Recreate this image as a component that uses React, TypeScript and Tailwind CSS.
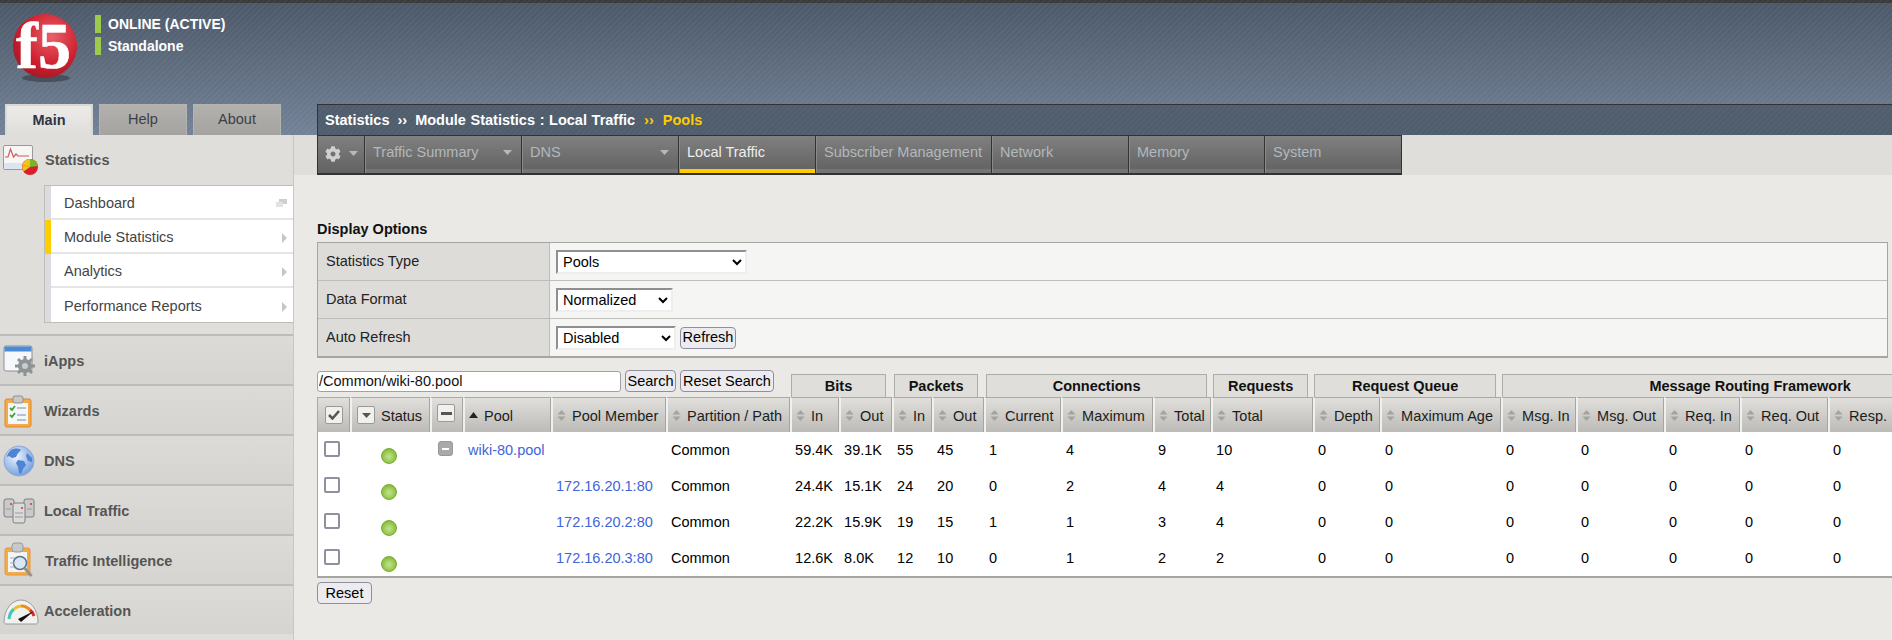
import { FaCog } from "react-icons/fa";

const widths = [33, 80, 33, 88, 115, 124, 49, 53, 40, 52, 77, 92, 58, 102, 67, 121, 75, 88, 76, 88, 88, 88];

function SortIcon({ active }: { active?: boolean }) {
  if (active) {
    return (
      <svg width="9" height="6" viewBox="0 0 9 6" className="shrink-0">
        <path d="M4.5 0 9 6H0z" fill="#222" />
      </svg>
    );
  }
  return (
    <svg width="9" height="11" viewBox="0 0 9 11" className="shrink-0">
      <path d="M4.5 0 8.5 4.5H.5z M.5 6.5h8L4.5 11z" fill="#a3a3a0" />
    </svg>
  );
}

function Th({ label, active }: { label: string; active?: boolean }) {
  return (
    <th className="h-[35px] p-0 font-normal text-left border-t border-t-[#a9a9a6] border-l-2 border-l-[#f0f0ee] border-r border-r-[#a5a5a2] bg-gradient-to-b from-[#e0dfdc] to-[#bcbbb7] whitespace-nowrap overflow-hidden">
      <div className="flex items-center gap-[6px] pl-[4px]">
        <SortIcon active={active} />
        <span className="text-[#1c1c1c] pt-[3px]">{label}</span>
      </div>
    </th>
  );
}

function Group({ label, span, pad }: { label: string; span: number; pad?: string }) {
  return (
    <th colSpan={span} className="p-0 align-bottom">
      <div className={`h-[23px] border border-b-0 border-[#acaca9] bg-[#dfdeda] font-bold text-[#111] text-center leading-[22px] whitespace-nowrap ${pad ?? "ml-[1px] mr-[6px]"}`}>
        {label}
      </div>
    </th>
  );
}

function Dot() {
  return (
    <span className="block w-[16px] h-[16px] rounded-full mx-auto bg-[radial-gradient(circle_at_50%_55%,#c2e294_0%,#9fce58_45%,#6fa82a_100%)] border border-[#76ad30]" />
  );
}

function Check() {
  return <input type="checkbox" className="block appearance-none w-[16px] h-[16px] border-2 border-[#8f8f9d] rounded-[2px] bg-white" />;
}

const rows = [
  { pool: "wiki-80.pool", member: "", v: ["59.4K", "39.1K", "55", "45", "1", "4", "9", "10"], minus: true },
  { pool: "", member: "172.16.20.1:80", v: ["24.4K", "15.1K", "24", "20", "0", "2", "4", "4"] },
  { pool: "", member: "172.16.20.2:80", v: ["22.2K", "15.9K", "19", "15", "1", "1", "3", "4"] },
  { pool: "", member: "172.16.20.3:80", v: ["12.6K", "8.0K", "12", "10", "0", "1", "2", "2"] },
];

const IconStatistics = (
  <svg width="38" height="32" viewBox="0 0 38 32">
    <rect x="1.5" y="1.5" width="29" height="24" rx="1.5" fill="#f6f6f6" stroke="#9a9a9a" />
    <rect x="2" y="19" width="28" height="6" fill="#dbe5ef" />
    <path d="M3 13h3l2.5-8 3 8 2.5-3 2 2h11" fill="none" stroke="#cf5b5b" strokeWidth="1.2" />
    <circle cx="28" cy="23" r="8" fill="#d8202a" />
    <path d="M28 23V15a8 8 0 0 1 8 7z" fill="#76b82a" />
    <path d="M28 23 20.5 21a8 8 0 0 1 7.5-6z" fill="#f2c21a" />
    <path d="M28 23l-7.5-2a8 8 0 0 0 1 6.500z" fill="#f2c21a" />
  </svg>
);
const IconIApps = (
  <svg width="34" height="32" viewBox="0 0 34 32">
    <rect x="1" y="1" width="28" height="25" rx="2" fill="#f7f8fb" stroke="#8f8f8f" />
    <rect x="1.500" y="1.500" width="27" height="5" fill="#4a8bd6" />
    <circle cx="22" cy="21" r="7" fill="#8d9496" />
    <path d="M22 11v20M12 21h20M15 14l14 14M29 14 15 28" stroke="#8d9496" strokeWidth="3" />
    <circle cx="22" cy="21" r="3" fill="#c9cdce" />
  </svg>
);
const IconWizards = (
  <svg width="32" height="34" viewBox="0 0 32 34">
    <rect x="2" y="5" width="26" height="28" rx="2" fill="#f4a94a" stroke="#d98a2b" />
    <rect x="5" y="9" width="20" height="21" fill="#f4f6f8" />
    <rect x="10" y="2" width="10" height="7" rx="2" fill="#c8c8c8" stroke="#8f8f8f" />
    <path d="M7 14l2 2 3-4M7 21l2 2 3-4" fill="none" stroke="#3da535" strokeWidth="1.800" />
    <path d="M14 14h9M14 21h9M14 26h9" stroke="#9db3c7" strokeWidth="1.500" />
  </svg>
);
const IconGlobe = (
  <svg width="32" height="32" viewBox="0 0 32 32">
    <defs>
      <radialGradient id="gl" cx="0.4" cy="0.35" r="0.8">
        <stop offset="0" stopColor="#eef4fd" />
        <stop offset="1" stopColor="#5d8fdb" />
      </radialGradient>
    </defs>
    <circle cx="16" cy="16" r="15" fill="url(#gl)" stroke="#8fa9cf" />
    <path d="M8 5c3-2 8-2 10 0l-3 3-2 4-4 1-3-2-2 1c0-3 2-5 4-7z" fill="#4f83d4" />
    <path d="M15 15l6 1 2 4-3 4-2 5-2-1-1-6-2-4z" fill="#4f83d4" />
    <path d="M24 8l5 5v4l-4-1-2-5z" fill="#4f83d4" />
  </svg>
);
const IconServers = (
  <svg width="32" height="28" viewBox="0 0 32 28">
    <rect x="1" y="2" width="10" height="18" rx="2" fill="#c9cbca" stroke="#7f7f7f" />
    <rect x="21" y="2" width="10" height="18" rx="2" fill="#c9cbca" stroke="#7f7f7f" />
    <rect x="10" y="6" width="12" height="20" rx="2" fill="#dadbda" stroke="#7f7f7f" />
    <circle cx="8" cy="7" r="1.100" fill="#d43b3b" />
    <circle cx="28" cy="7" r="1.100" fill="#d43b3b" />
    <circle cx="19" cy="11" r="1.100" fill="#d43b3b" />
    <path d="M12 16h8M12 20h8M3 12h5M24 12h5" stroke="#9a9a9a" />
  </svg>
);
const IconTI = (
  <svg width="32" height="38" viewBox="0 0 32 38">
    <rect x="2" y="6" width="25" height="27" rx="2" fill="#f4a94a" stroke="#e19a3c" />
    <rect x="5" y="10" width="19" height="20" fill="#f2f4f6" />
    <rect x="9" y="1" width="11" height="9" rx="3" fill="#c8c8c8" stroke="#9a9a9a" />
    <circle cx="17" cy="21" r="6.500" fill="#d8e6f6" stroke="#5c7386" strokeWidth="1.500" />
    <path d="M21.500 26l7 8" stroke="#8f9496" strokeWidth="3" />
    <path d="M7 16h5M7 21h4M7 25h4" stroke="#9db3c7" />
  </svg>
);
const IconGauge = (
  <svg width="36" height="28" viewBox="0 0 36 28">
    <path d="M1 25a17 22 0 0 1 34 0c0 1-1 2-2 2H3c-1 0-2-1-2-2z" fill="#f1f1ef" stroke="#9a9a9a" />
    <path d="M6 22a12 14 0 0 1 5-10" fill="none" stroke="#45c4b8" strokeWidth="3" />
    <path d="M11 12a12 14 0 0 1 7-3" fill="none" stroke="#f0c020" strokeWidth="3" />
    <path d="M18 9a12 14 0 0 1 9 4" fill="none" stroke="#ee8a25" strokeWidth="3" />
    <path d="M27 13a12 14 0 0 1 4 6" fill="none" stroke="#e02b2b" strokeWidth="3" />
    <path d="M15 22 31 14l-13 11z" fill="#111" />
  </svg>
);

const sideItems = [
  { label: "iApps", icon: IconIApps },
  { label: "Wizards", icon: IconWizards },
  { label: "DNS", icon: IconGlobe },
  { label: "Local Traffic", icon: IconServers },
  { label: "Traffic Intelligence", icon: IconTI },
  { label: "Acceleration", icon: IconGauge },
];

const menu = [
  { label: "Dashboard" },
  { label: "Module Statistics", active: true, arrow: true },
  { label: "Analytics", arrow: true },
  { label: "Performance Reports", arrow: true },
];

const Caret = () => (
  <svg width="9" height="5" viewBox="0 0 9 5">
    <path d="M0 0h9L4.500 5z" fill="#b8b8b8" />
  </svg>
);

const navItems = [
  { label: "Traffic Summary", w: "w-[157px]", caret: true },
  { label: "DNS", w: "w-[157px]", caret: true },
  { label: "Local Traffic", w: "w-[137px]", active: true },
  { label: "Subscriber Management", w: "w-[176px]" },
  { label: "Network", w: "w-[137px]" },
  { label: "Memory", w: "w-[136px]" },
  { label: "System", w: "w-[137px]" },
];

const btn = "h-[22px] px-0 rounded-[4px] border border-[#8f8f9d] bg-[#ebebf0] text-[14.5px] leading-none text-black whitespace-nowrap";
const sel = "h-[24px] pl-[1px] bg-white text-[14.5px] text-black border-2 border-t-[#8f8f8f] border-l-[#8f8f8f] border-r-[#eeeeee] border-b-[#eeeeee]";

export default function App() {
  return (
    <div className="w-[1892px] h-[640px] overflow-hidden flex font-['Liberation_Sans',Arial,sans-serif] text-[14.5px] bg-no-repeat bg-[length:100%_135px,100%_135px] bg-[repeating-linear-gradient(135deg,rgba(255,255,255,0)_0_2px,rgba(255,255,255,0.035)_2px_4px),linear-gradient(180deg,#3a3a3a_0,#3a3a3a_3px,#4b5868_3px,#738297_135px)] bg-[#eae9e5]">
      {/* left column */}
      <div className="w-[294px] shrink-0 flex flex-col">
        <div className="h-[104px] flex items-start pl-[12px] pt-[13px]">
          <svg width="70" height="70" viewBox="0 0 70 70" className="shrink-0 overflow-visible">
            <defs>
              <radialGradient id="ball" cx="0.6" cy="0.35" r="0.75">
                <stop offset="0" stopColor="#e8616a" />
                <stop offset="0.6" stopColor="#cf1f2e" />
                <stop offset="1" stopColor="#9c1622" />
              </radialGradient>
            </defs>
            <ellipse cx="34" cy="65" rx="24" ry="4" fill="#30343a" opacity="0.55" />
            <circle cx="33" cy="33" r="32" fill="url(#ball)" />
            <text x="4" y="55" fontFamily="Liberation Serif" fontWeight="700" fontSize="66" fill="#ffffff" stroke="#ffffff" strokeWidth="0.6">f5</text>
          </svg>
          <div className="ml-[13px] pt-[2px] flex flex-col gap-[4px] font-bold text-white text-[14px]">
            <div className="flex items-center h-[18px] gap-[7px]">
              <span className="w-[6px] h-[18px] bg-[#9ccb4b]" />
              <span>ONLINE (ACTIVE)</span>
            </div>
            <div className="flex items-center h-[18px] gap-[7px]">
              <span className="w-[6px] h-[18px] bg-[#9ccb4b]" />
              <span>Standalone</span>
            </div>
          </div>
        </div>

        <div className="h-[31px] flex pl-[5px] gap-[6px]">
          <div className="w-[88px] flex items-center justify-center pt-[1px] font-bold text-[#2f3542] border-t-2 border-x-2 border-[#d8d8d6] bg-gradient-to-b from-[#ecebe8] to-[#dfdeda]">Main</div>
          <div className="w-[88px] flex items-center justify-center text-[#3c4048] border border-b-0 border-[#b4b4b0] bg-gradient-to-b from-[#b2b1ad] to-[#a4a39f]">Help</div>
          <div className="w-[88px] flex items-center justify-center text-[#3c4048] border border-b-0 border-[#b4b4b0] bg-gradient-to-b from-[#b2b1ad] to-[#a4a39f]">About</div>
        </div>

        <div className="flex-1 bg-[#dfdeda] border-r border-[#c8c7c3] flex flex-col">
          <div className="h-[50px] shrink-0 flex items-center pl-[2px] font-bold text-[#555]">
            <span className="w-[43px] shrink-0">{IconStatistics}</span>
            <span className="pt-[2px]">Statistics</span>
          </div>
          <div className="ml-[44px] border border-r-0 border-[#bdbdba] bg-white">
            {menu.map((m, i) => (
              <div key={m.label} className="h-[34px] flex items-stretch">
                <span className={`w-[6px] shrink-0 ${m.active ? "bg-[#ffcc00]" : "bg-[#dcdce0]"}`} />
                <div className={`flex-1 flex items-center justify-between pl-[13px] pr-[6px] pt-[3px] text-[#444] ${i < 3 ? "border-b-2 border-[#e5e5e5]" : ""}`}>
                  <span>{m.label}</span>
                  {m.arrow ? (
                    <svg width="5" height="10" viewBox="0 0 5 10"><path d="M0 0l5 5-5 5z" fill="#c6c6c6" /></svg>
                  ) : (
                    <svg width="11" height="8" viewBox="0 0 11 8" className="mb-[2px]"><path d="M3 0h8v5H3z" fill="#cfcfcf" /><path d="M0 3h7v5H0z" fill="#e2e2e2" /></svg>
                  )}
                </div>
              </div>
            ))}
          </div>
          <div className="h-[11px] shrink-0" />
          {sideItems.map((s, i) => (
            <div key={s.label} className="h-[50px] shrink-0 border-t-2 border-[#bcbcb9] flex items-center pt-[1px] bg-gradient-to-b from-[#dcdbd7] to-[#d5d4d0] font-bold text-[#555]">
              <span className="w-[44px] pl-[3px] shrink-0 flex items-center">{s.icon}</span>
              <span className={i === 4 ? "pl-[1px] pt-[2px]" : "pt-[2px]"}>{s.label}</span>
            </div>
          ))}
        </div>
      </div>

      {/* right column */}
      <div className="flex-1 min-w-0 pt-[104px] flex flex-col">
        <div className="ml-[23px] h-[31px] border-t border-l border-[#333] bg-[#4f5d6d] bg-[repeating-linear-gradient(135deg,rgba(255,255,255,0)_0_2px,rgba(255,255,255,0.025)_2px_4px)] flex items-center pl-[7px] pt-[2px] font-bold text-white whitespace-pre [word-spacing:0.6px]">
          <span>Statistics</span>
          <span className="mx-[8px]">››</span>
          <span>Module Statistics : Local Traffic</span>
          <span className="mx-[9px] text-[#ffcc00]">››</span>
          <span className="text-[#ffcc00]">Pools</span>
        </div>
        <div className="h-[40px] flex bg-[#dfdeda]">
          <div className="ml-[23px] flex border-l border-b-2 border-t border-[#333]">
            <div className="w-[47px] flex items-center pl-[7px] gap-[8px] pb-[2px] bg-gradient-to-b from-[#808080] to-[#626262] border-r border-[#333]">
              <FaCog className="text-[#d0d0d0] text-[16px]" />
              <Caret />
            </div>
            {navItems.map((n) => (
              <div key={n.label} className={`${n.w} flex flex-col border-r border-[#333] border-l border-l-[#8a8a8a]`}>
                <div className="h-[33px] flex items-center justify-between pl-[7px] pr-[9px] bg-gradient-to-b from-[#808080] to-[#646464]">
                  <span className={n.active ? "text-[#eeeeee]" : "text-[#b2b8bc]"}>{n.label}</span>
                  {n.caret ? <Caret /> : null}
                </div>
                <div className={`flex-1 ${n.active ? "bg-[#ffcc00]" : "bg-[#747474]"}`} />
              </div>
            ))}
          </div>
        </div>

        <div className="pl-[23px] pr-[4px] pt-[46px]">
          <div className="h-[21px] font-bold text-[#111] leading-[16px]">Display Options</div>
          <div className="border border-[#a5a5a2] border-b-2 flex flex-col bg-[#f5f5f3] text-[#222]">
            <div className="h-[38px] flex border-b border-[#bdbdba]">
              <div className="w-[232px] bg-[#dddcd8] border-r border-[#bdbdba] flex items-center pl-[8px]">Statistics Type</div>
              <div className="flex-1 flex items-center pl-[6px]">
                <select defaultValue="Pools" className={`${sel} w-[191px]`}><option>Pools</option></select>
              </div>
            </div>
            <div className="h-[38px] flex border-b border-[#bdbdba]">
              <div className="w-[232px] bg-[#dddcd8] border-r border-[#bdbdba] flex items-center pl-[8px]">Data Format</div>
              <div className="flex-1 flex items-center pl-[6px]">
                <select defaultValue="Normalized" className={`${sel} w-[117px]`}><option>Normalized</option></select>
              </div>
            </div>
            <div className="h-[37px] flex">
              <div className="w-[232px] bg-[#dddcd8] border-r border-[#bdbdba] flex items-center pl-[8px]">Auto Refresh</div>
              <div className="flex-1 flex items-center pl-[6px] gap-[4px]">
                <select defaultValue="Disabled" className={`${sel} w-[120px]`}><option>Disabled</option></select>
                <button className={`${btn} w-[56px]`}>Refresh</button>
              </div>
            </div>
          </div>

          <div className="mt-[12px] w-[1575px]">
            <table className="table-fixed border-separate border-spacing-0 w-[1687px]">
              <colgroup>
                {widths.map((w, i) => (
                  <col key={i} style={{ width: w }} />
                ))}
              </colgroup>
              <thead>
                <tr className="h-[27px]">
                  <th colSpan={6} className="p-0 font-normal align-top text-left">
                    <div className="flex items-start gap-[4px]">
                      <input defaultValue="/Common/wiki-80.pool" className="w-[304px] h-[21px] mt-[1px] px-[1px] rounded-[3px] border border-[#a0a0a8] bg-white text-[14.5px] text-[#111]" />
                      <button className={`${btn} w-[51px]`}>Search</button>
                      <button className={`${btn} w-[94px]`}>Reset Search</button>
                    </div>
                  </th>
                  <Group label="Bits" span={2} />
                  <Group label="Packets" span={2} pad="ml-[2px] mr-[6px]" />
                  <Group label="Connections" span={3} pad="ml-[2px] mr-[4px]" />
                  <Group label="Requests" span={1} pad="ml-[2px] mr-[5px]" />
                  <Group label="Request Queue" span={2} pad="ml-[1px] mr-[5px]" />
                  <Group label="Message Routing Framework" span={6} pad="ml-[1px] mr-[6px]" />
                </tr>
                <tr>
                  <th className="h-[35px] p-0 border-t border-l border-[#a9a9a6] border-r border-r-[#a5a5a2] bg-gradient-to-b from-[#e0dfdc] to-[#bcbbb7]">
                    <span className="mx-auto w-[18px] h-[18px] flex items-center justify-center bg-[#f0f0ee] border border-[#9a9a98] rounded-[2px]">
                      <svg width="12" height="10" viewBox="0 0 12 10"><path d="M1 5l3.500 3.500L11 1" fill="none" stroke="#555" strokeWidth="2.500" /></svg>
                    </span>
                  </th>
                  <th className="p-0 font-normal text-left border-t border-t-[#a9a9a6] border-l-2 border-l-[#f0f0ee] border-r border-r-[#a5a5a2] bg-gradient-to-b from-[#e0dfdc] to-[#bcbbb7]">
                    <div className="flex items-center pl-[5px] gap-[6px]">
                      <span className="w-[18px] h-[18px] flex items-center justify-center bg-[#f0f0ee] border border-[#9a9a98] rounded-[2px]">
                        <svg width="9" height="5" viewBox="0 0 9 5"><path d="M0 0h9L4.500 5z" fill="#555" /></svg>
                      </span>
                      <span className="text-[#1c1c1c] pt-[3px]">Status</span>
                    </div>
                  </th>
                  <th className="p-0 border-t border-t-[#a9a9a6] border-l-2 border-l-[#f0f0ee] border-r border-r-[#a5a5a2] bg-gradient-to-b from-[#e0dfdc] to-[#bcbbb7]">
                    <span className="ml-[5px] mb-[4px] w-[18px] h-[18px] flex items-center justify-center bg-[#f0f0ee] border border-[#9a9a98] rounded-[2px]">
                      <span className="w-[11px] h-[3px] bg-[#555]" />
                    </span>
                  </th>
                  <Th label="Pool" active />
                  {["Pool Member", "Partition / Path", "In", "Out", "In", "Out", "Current", "Maximum", "Total", "Total", "Depth", "Maximum Age", "Msg. In", "Msg. Out", "Req. In", "Req. Out", "Resp. In", "Resp. Out"].map((h, i) => (
                    <Th key={i} label={h} />
                  ))}
                </tr>
              </thead>
              <tbody className="bg-white text-black">
                {rows.map((r, i) => {
                  const last = i === rows.length - 1;
                  const b = last ? "border-b-2 border-b-[#a5a5a2]" : "";
                  const h = last ? "h-[38px]" : "h-[36px]";
                  const cell = `p-0 pl-[5px] pt-[2px] whitespace-nowrap ${b}`;
                  return (
                    <tr key={i} className={h}>
                      <td className={`p-0 pl-[6px] pb-[2px] border-l border-l-[#a5a5a2] ${b}`}><Check /></td>
                      <td className={`p-0 pt-[12px] pr-[2px] ${b}`}><Dot /></td>
                      <td className={`p-0 pl-[8px] pb-[3px] ${b}`}>
                        {r.minus ? (
                          <span className="w-[15px] h-[15px] flex items-center justify-center bg-[#a9a9a9] border border-[#999] rounded-[3px]">
                            <span className="w-[7px] h-[2px] bg-white" />
                          </span>
                        ) : null}
                      </td>
                      <td className={`${cell} text-[#3d66d6]`}>{r.pool}</td>
                      <td className={`${cell} text-[#3d66d6]`}>{r.member}</td>
                      <td className={`${cell}`}>Common</td>
                      {r.v.map((x, j) => (
                        <td key={j} className={cell}>{x}</td>
                      ))}
                      {Array.from({ length: 8 }).map((_, j) => (
                        <td key={j} className={cell}>0</td>
                      ))}
                    </tr>
                  );
                })}
              </tbody>
            </table>
            <button className={`${btn} w-[55px] mt-[4px] block`}>Reset</button>
          </div>
        </div>
      </div>
    </div>
  );
}
